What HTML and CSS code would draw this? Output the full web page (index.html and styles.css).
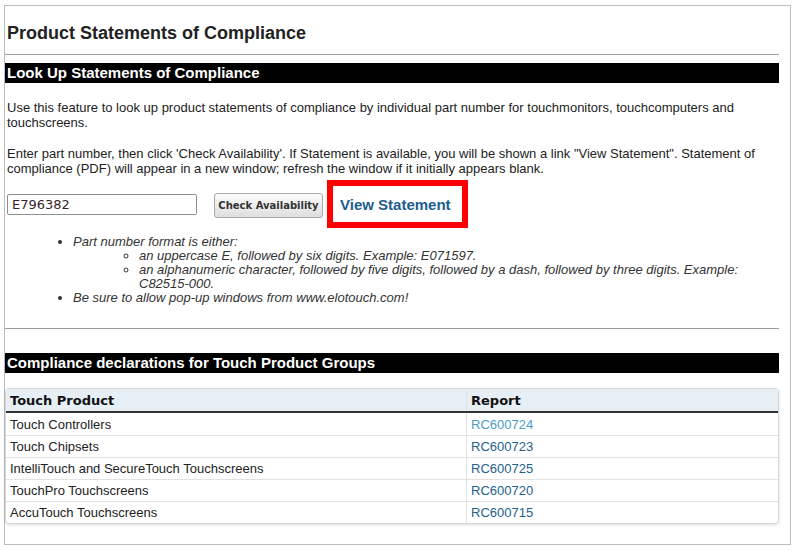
FILE: index.html
```html
<!DOCTYPE html>
<html lang="en">
<head>
    <meta charset="UTF-8">
    <title>Product Statements of Compliance</title>
    <link rel="stylesheet" href="styles.css">
</head>
<body>

    <div class="page">
        <h1 class="page-title">Product Statements of Compliance</h1>
        <hr class="rule">

        <h2 class="bar">Look Up Statements of Compliance</h2>
        <p class="intro intro-first">Use this feature to look up product statements of compliance by individual part number for touchmonitors, touchcomputers and touchscreens.</p>
        <p class="intro">Enter part number, then click 'Check Availability'. If Statement is available, you will be shown a link "View Statement". Statement of compliance (PDF) will appear in a new window; refresh the window if it initially appears blank.</p>

        <form class="lookup" onsubmit="return false;">
            <input type="text" class="part-input" value="E796382">
            <button type="submit" class="check-btn">Check Availability</button>
            <div class="result-box">
                <a href="#" class="view-link">View Statement</a>
            </div>
        </form>

        <ul class="notes">
            <li>Part number format is either:
                <ul>
                    <li>an uppercase E, followed by six digits. Example: E071597.</li>
                    <li>an alphanumeric character, followed by five digits, followed by a dash, followed by three digits. Example: C82515-000.</li>
                </ul>
            </li>
            <li>Be sure to allow pop-up windows from www.elotouch.com!</li>
        </ul>

        <hr class="rule rule-low">

        <h2 class="bar">Compliance declarations for Touch Product Groups</h2>
        <div class="table-box">
            <table class="groups">
                <thead>
                    <tr>
                        <th class="col-product">Touch Product</th>
                        <th>Report</th>
                    </tr>
                </thead>
                <tbody>
                    <tr><td>Touch Controllers</td><td><a href="#" class="visited">RC600724</a></td></tr>
                    <tr><td>Touch Chipsets</td><td><a href="#">RC600723</a></td></tr>
                    <tr><td>IntelliTouch and SecureTouch Touchscreens</td><td><a href="#">RC600725</a></td></tr>
                    <tr><td>TouchPro Touchscreens</td><td><a href="#">RC600720</a></td></tr>
                    <tr><td>AccuTouch Touchscreens</td><td><a href="#">RC600715</a></td></tr>
                </tbody>
            </table>
        </div>
    </div>

</body>
</html>
```

FILE: styles.css
```css
/* Página de declaraciones de conformidad */
body {
    margin: 0;
    padding: 5px 4px 0 4px;
    background: #fff;
    font-family: "Liberation Sans", Arial, sans-serif;
    color: #222;
}

.page {
    width: 787px;
    height: 540px;
    border: 1px solid #bdbdbd;
    padding: 0 11px 0 0;
    box-sizing: border-box;
}

.page-title {
    font-size: 18px;
    font-weight: bold;
    line-height: 21px;
    margin: 17px 0 0 0;
    padding-left: 2px;
    color: #222;
}

.rule {
    border: none;
    border-top: 1px solid #9d9d9d;
    margin: 10px 0 8px 0;
    height: 0;
}

.rule-low {
    margin: 23px 0 24px 0;
}

/* Barras negras de sección */
.bar {
    background: #000;
    color: #fff;
    font-size: 15px;
    font-weight: bold;
    line-height: 20px;
    height: 20px;
    margin: 0;
    padding: 0 2px;
}

.intro {
    font-size: 13px;
    line-height: 15px;
    margin: 16px 0 0 0;
    padding-left: 2px;
    color: #222;
}

.intro-first {
    margin-top: 17px;
}

/* Formulario de búsqueda */
.lookup {
    display: flex;
    align-items: center;
    margin: 4px 0 0 2px;
}

.part-input {
    width: 190px;
    height: 21px;
    box-sizing: border-box;
    border: 1px solid #8f8f8f;
    border-radius: 2px;
    padding: 0 4px;
    font-family: "DejaVu Sans", Verdana, sans-serif;
    font-size: 13px;
    color: #3a1f2a;
}

.check-btn {
    margin-left: 17px;
    margin-top: 2px;
    width: 109px;
    height: 25px;
    padding: 0;
    border: 1px solid #a9a9a9;
    border-radius: 3px;
    background: linear-gradient(#fbfbfb, #dedede);
    font-family: "DejaVu Sans", Verdana, sans-serif;
    font-size: 10px;
    font-weight: bold;
    color: #333;
    cursor: pointer;
}

.result-box {
    margin-left: 4px;
    width: 141px;
    height: 48px;
    box-sizing: border-box;
    border: 6px solid #f00;
    display: flex;
    align-items: center;
    padding-left: 7px;
}

.view-link {
    font-size: 15px;
    font-weight: bold;
    color: #1b5d8e;
    text-decoration: none;
}

/* Lista de notas */
.notes {
    margin: 7px 0 0 0;
    padding-left: 68px;
    font-size: 13px;
    font-style: italic;
    line-height: 14px;
    color: #333;
}

.notes ul {
    margin: 0;
    padding-left: 66px;
    list-style-type: circle;
}

/* Tabla de grupos de producto */
.table-box {
    margin-top: 15px;
    border: 1px solid #d8d8d8;
    border-radius: 4px;
    box-shadow: 0 1px 3px rgba(0, 0, 0, 0.15);
    overflow: hidden;
}

.groups {
    width: 100%;
    border-collapse: collapse;
    font-size: 13px;
}

.groups th {
    background: #e6eef6;
    font-family: "DejaVu Sans", Verdana, sans-serif;
    font-size: 13px;
    font-weight: bold;
    text-align: left;
    height: 22px;
    padding: 0 4px;
    border-bottom: 2px solid #333;
    color: #111;
}

.groups th.col-product {
    width: 452px;
}

.groups td {
    height: 21px;
    padding: 0 4px;
    border-top: 1px solid #e2e2e2;
    color: #222;
}

.groups td + td,
.groups th + th {
    border-left: 1px solid #e2e2e2;
}

.groups tbody tr:first-child td {
    border-top: none;
    height: 22px;
}

.groups a {
    color: #1d5f8e;
    text-decoration: none;
}

.groups a.visited {
    color: #4a9dc9;
}
```
